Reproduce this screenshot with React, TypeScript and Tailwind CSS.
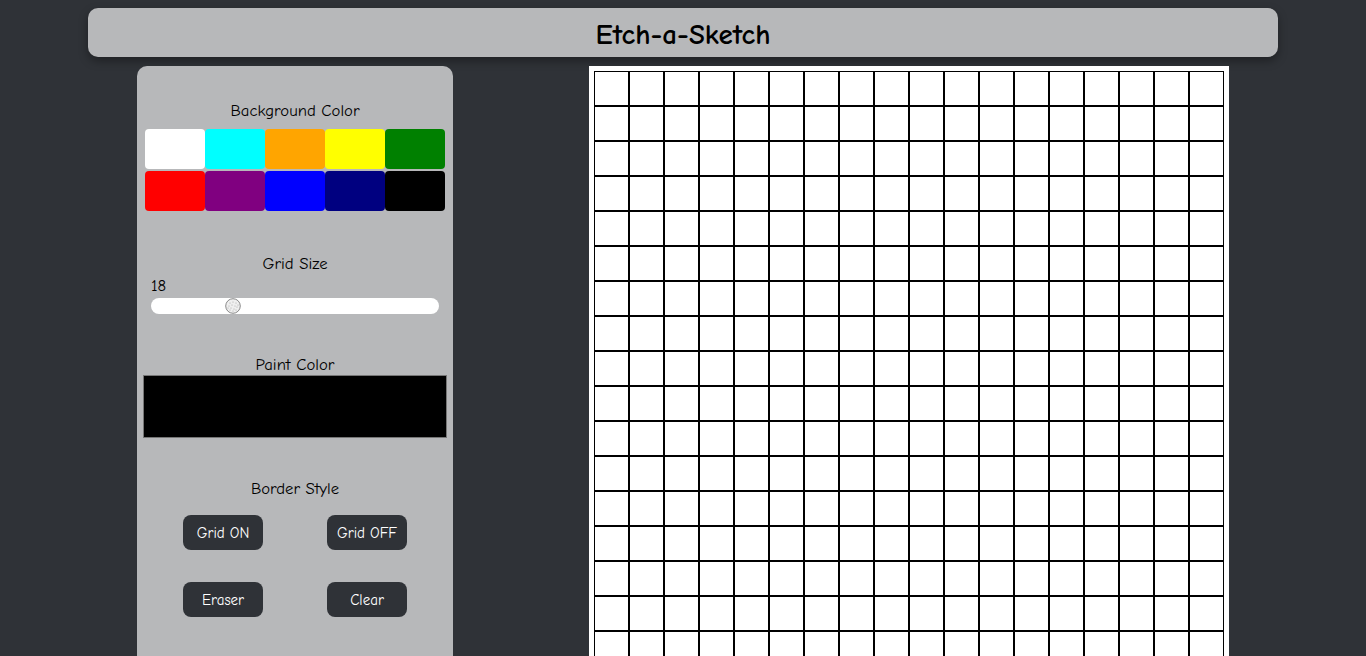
import React from "react";

const swatches = [
  "bg-[#ffffff]",
  "bg-[#00ffff]",
  "bg-[#ffa500]",
  "bg-[#ffff00]",
  "bg-[#008000]",
  "bg-[#ff0000]",
  "bg-[#800080]",
  "bg-[#0000ff]",
  "bg-[#000080]",
  "bg-[#000000]",
];

const cells = Array.from({ length: 18 * 18 }, (_, i) => i);

function Thumb() {
  return (
    <svg width="16" height="16" viewBox="0 0 16 16">
      <circle cx="8" cy="8" r="7.3" fill="#efefef" stroke="#8a8a8a" strokeWidth="1" />
      {[
        [5, 5], [8, 4], [11, 5], [4, 8], [7, 7], [10, 8], [12, 9], [6, 10], [9, 11], [5, 12], [11, 12], [8, 13], [13, 7], [3, 10],
      ].map(([x, y], i) => (
        <circle key={i} cx={x} cy={y} r="0.5" fill="#9a9a9a" />
      ))}
    </svg>
  );
}

export default function App() {
  return (
    <div className="min-h-screen bg-[#2f3237] pt-[8px] font-['Comic_Sans_MS','Comic_Neue','Noto_Sans',sans-serif] text-black">
      <header className="mx-auto flex h-[49px] w-[1190px] items-center justify-center rounded-[10px] bg-[#b7b8ba] shadow-[0_4px_10px_rgba(0,0,0,0.35)]">
        <h1 className="mt-[3px] text-[29px] font-bold leading-none">Etch-a-Sketch</h1>
      </header>
      <main className="mt-[9px] flex items-start justify-between px-[137px]">
        <aside className="flex h-[640px] w-[316px] flex-col rounded-[10px] bg-[#b7b8ba] pt-[33px]">
          <h2 className="text-center text-[16.7px] leading-[24px]">Background Color</h2>
          <div className="mt-[6px] grid grid-cols-5 gap-y-[2px] px-[8px]">
            {swatches.map((c, i) => (
              <div key={i} className={`h-[40px] rounded-[4px] ${c}`} />
            ))}
          </div>
          <h2 className="mt-[41px] text-center text-[16.7px] leading-[24px]">Grid Size</h2>
          <div className="px-[14px] text-[16.7px] leading-[20px]">18</div>
          <div className="mt-[2px] px-[14px]">
            <div className="relative h-[16px] w-full rounded-full bg-white">
              <div className="absolute left-[74px] top-0">
                <Thumb />
              </div>
            </div>
          </div>
          <h2 className="mt-[39px] text-center text-[16.7px] leading-[24px]">Paint Color</h2>
          <div className="mt-[-2px] px-[6px]">
            <div className="h-[63px] w-full border border-[#767676] bg-black" />
          </div>
          <h2 className="mt-[39px] text-center text-[16.7px] leading-[24px]">Border Style</h2>
          <div className="mt-[14px] grid grid-cols-2 gap-y-[32px] px-[14px]">
            {["Grid ON", "Grid OFF", "Eraser", "Clear"].map((t) => (
              <div key={t} className="flex justify-center">
                <button className="h-[35px] w-[80px] rounded-[8px] bg-[#2f3237] pt-[2px] text-[15px] text-white">
                  {t}
                </button>
              </div>
            ))}
          </div>
        </aside>
        <div className="h-[640px] w-[640px] bg-white p-[5px]">
          <div className="grid grid-cols-[repeat(18,35px)] grid-rows-[repeat(18,35px)]">
            {cells.map((i) => (
              <div key={i} className="border border-black bg-white" />
            ))}
          </div>
        </div>
      </main>
    </div>
  );
}
